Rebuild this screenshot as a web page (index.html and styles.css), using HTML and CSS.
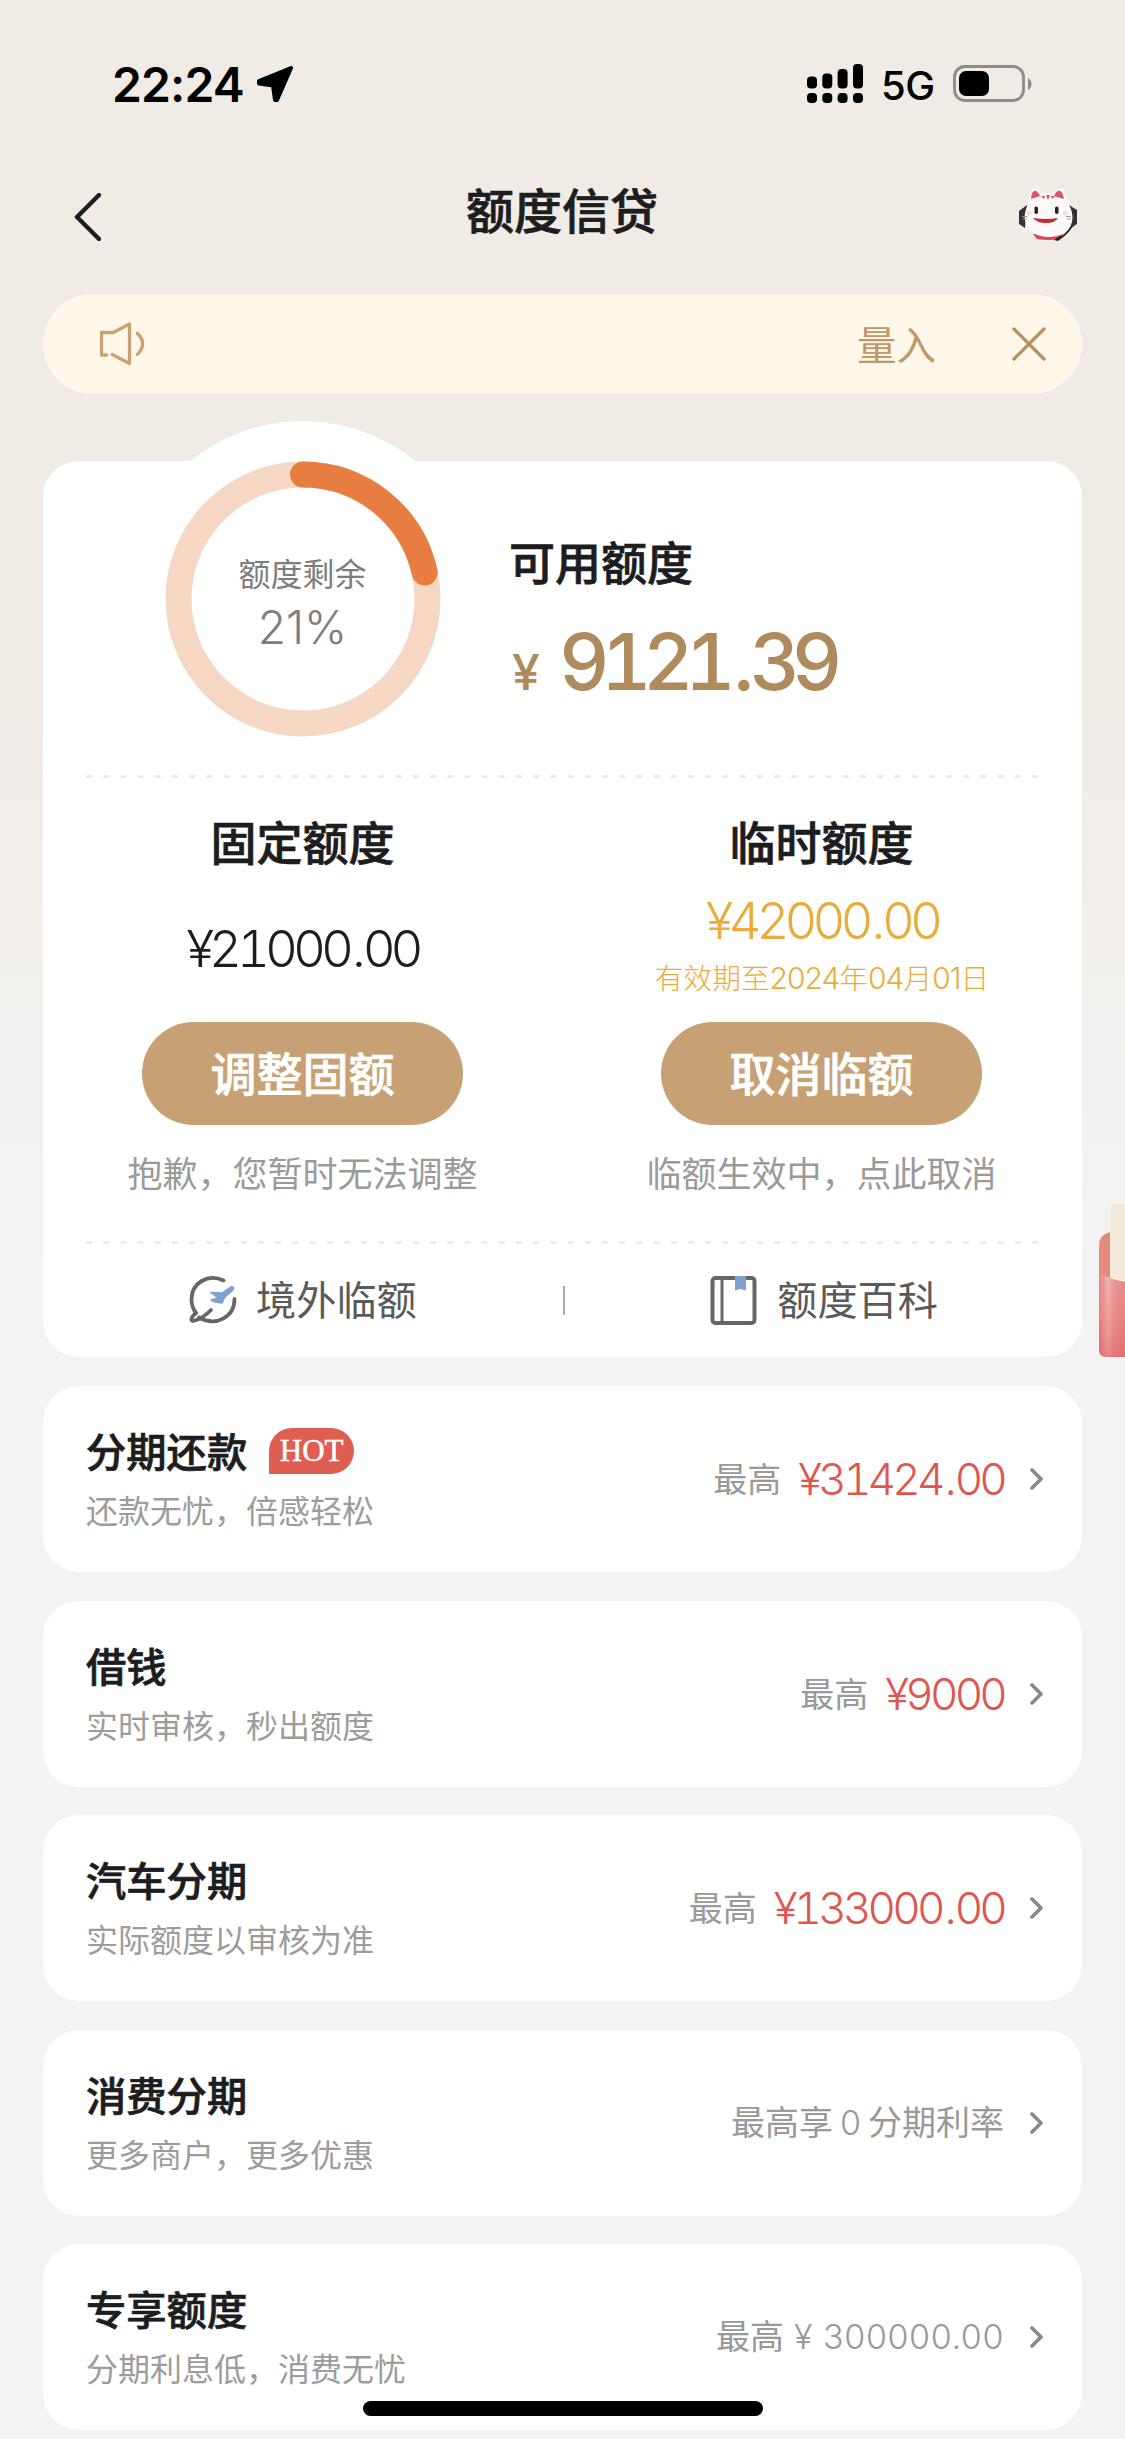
FILE: index.html
```html
<!DOCTYPE html>
<html lang="zh-CN">
<head>
<meta charset="utf-8">
<title>额度信贷</title>
<link rel="stylesheet" href="styles.css">
</head>
<body>
<div class="screen">
  <div class="status">
    <span class="time">22:24</span>
    <svg class="loc" viewBox="0 0 38 38"><path d="M35 3 21 35H19L17 20.500 3 18.500V16Z" stroke="#000" stroke-width="4" stroke-linejoin="round"/></svg>
    <svg class="signal" viewBox="0 0 57 40"><rect x="0" y="12.500" width="10" height="12" rx="4"/><rect x="15.300" y="9.500" width="10" height="15" rx="4"/><rect x="30.600" y="5" width="10" height="19.500" rx="4"/><rect x="46" y="0" width="10" height="24.500" rx="4"/><rect x="0" y="29" width="10" height="10" rx="4"/><rect x="15.300" y="29" width="10" height="10" rx="4"/><rect x="30.600" y="29" width="10" height="10" rx="4"/><rect x="46" y="29" width="10" height="10" rx="4"/></svg>
    <span class="net">5G</span>
    <svg class="battery" viewBox="0 0 79 38"><rect x="1.500" y="1.500" width="69" height="34" rx="10.500" fill="none" stroke="#8f8b87" stroke-width="2.800"/><rect x="6" y="6" width="30" height="25" rx="7"/><path d="M75 13q3.500 2 3.500 6t-3.500 6z" fill="#8f8b87"/></svg>
  </div>
  <div class="nav">
    <svg class="back" viewBox="0 0 28 48"><path d="M26 2 4 24 26 46" fill="none" stroke="#1d1d1f" stroke-width="4.400" stroke-linecap="round" stroke-linejoin="round"/></svg>
    <h1 class="nav-title">额度信贷</h1>
    <svg class="cat" viewBox="0 0 62 56">
      <path d="M10 18 2 24V37L8 41zM52 18 60 23V37L54 41z" fill="#333133"/>
      <path d="M16 47H46L42 52Q31 54 20 52Z" fill="#dc4658"/>
      <path d="M11 18 13 6C15 0 21 0 24 7Q31 5 38 7C41 0 47 0 48 6L52 18C61 34 52 50 32 50S2 34 11 18Z" fill="#fffaf9"/>
      <path d="M14 12C15 1 20 2 23 9ZM37 9C40 2 45 1 47 12Z" fill="#dd5468"/>
      <path d="M29 8 31 13 33 8ZM24 9 27 12 28 9ZM34 9 35 12 38 9Z" fill="#dd5468"/>
      <circle cx="12" cy="26" r="2.500" fill="#fbdcdc"/><circle cx="48" cy="26" r="2.500" fill="#fbdcdc"/>
      <rect x="17.500" y="19.500" width="3.500" height="7.500" rx="1.700" fill="#222"/><rect x="38" y="19.500" width="3.500" height="7.500" rx="1.700" fill="#222"/>
      <path d="M16 31Q29 33 41 31Q38 36 29 36T16 31Z" fill="#c92a31"/>
      <path d="M5 29.500h5M6 32h4M54 29.500h-5M54 32h-4" stroke="#999" stroke-width="1"/>
      <path d="M55 39Q49 48 43 51" fill="none" stroke="#222" stroke-width="1.800"/><path d="M37 53 43 49 46 50 41 54Z" fill="#222"/>
    </svg>
  </div>
  <div class="notice">
    <svg class="speaker" viewBox="0 0 47 44"><g fill="none" stroke="#c9a274" stroke-width="3.300" stroke-linecap="round" stroke-linejoin="round"><path d="M7.500 33H2.500V10.500H14.300L30.500 2V41.500L13.300 32.500"/><path d="M38.300 11.200Q49 21.700 38.300 32.300"/></g></svg>
    <span class="notice-text">量入</span>
    <svg class="close" viewBox="0 0 34 34"><path d="M2 2 32 32M32 2 2 32" stroke="#b98f5e" stroke-width="3.300" stroke-linecap="round"/></svg>
  </div>

  <section class="quota">
    <div class="quota-bump"></div>
    <div class="overview">
      <div class="ring">
        <svg class="ring-svg" viewBox="0 0 276 276"><circle cx="138" cy="138" r="124.500" fill="none" stroke="#f6d7c4" stroke-width="26"/><path d="M138 13.500A124.500 124.500 0 0 1 259.700 111.500" fill="none" stroke="#e87d42" stroke-width="26" stroke-linecap="round"/></svg>
        <div class="ring-text"><span class="ring-label">额度剩余</span><span class="ring-value">21%</span></div>
      </div>
      <div class="available">
        <h2 class="heading">可用额度</h2>
        <div class="big"><span class="yen">¥</span><span class="big-num">9121<span class="dot">.</span>39</span></div>
      </div>
    </div>
    <svg class="dash" viewBox="0 0 952 3"><path d="M0 1.500H952" stroke="#e8e8e8" stroke-width="2.500" stroke-dasharray="6 11.200"/></svg>
    <div class="columns">
      <div class="col">
        <h2 class="heading">固定额度</h2>
        <div class="amounts"><span class="amount">¥21000<span class="dot">.</span>00</span></div>
        <div class="pill">调整固额</div>
        <p class="hint">抱歉，您暂时无法调整</p>
      </div>
      <div class="col">
        <h2 class="heading">临时额度</h2>
        <div class="amounts gold"><span class="amount">¥42000<span class="dot">.</span>00</span><span class="valid">有效期至<span class="vn">2024</span>年<span class="vn">04</span>月<span class="vn">01</span>日</span></div>
        <div class="pill">取消临额</div>
        <p class="hint">临额生效中，点此取消</p>
      </div>
    </div>
    <svg class="dash" viewBox="0 0 952 3"><path d="M0 1.500H952" stroke="#e8e8e8" stroke-width="2.500" stroke-dasharray="6 11.200"/></svg>
    <div class="links">
      <div class="link">
        <svg class="link-icon" viewBox="0 0 48 50"><g fill="none" stroke="#666" stroke-width="3.800" stroke-linecap="round" stroke-linejoin="round"><path d="M34.500 5.500C19-2 2.500 8 2.500 24.500C2.500 30 4 34 7 38"/><path d="M45.500 24C45.500 42 27 52 10 42.500"/><path d="M7 38C1 43 1 47 6 45.500C12 44 18 39 22 35"/></g><path d="M42.500 11.500Q45.500 12 44 15L36 22 33 28 26 27 22 25 29 23 22 17.500 33 18Z" fill="#7ea1cf" stroke="#7ea1cf" stroke-width="1.500" stroke-linejoin="round"/></svg>
        <span>境外临额</span>
      </div>
      <i class="divider"></i>
      <div class="link">
        <svg class="link-icon" viewBox="0 0 48 50"><rect x="2.500" y="3" width="42" height="45" rx="3" fill="none" stroke="#666" stroke-width="4"/><path d="M12 3V48" stroke="#666" stroke-width="3"/><path d="M25 1H36V15.500L30.500 14L25 15.500Z" fill="#7ea1cf"/></svg>
        <span>额度百科</span>
      </div>
    </div>
  </section>

  <section class="list">
    <div class="item"><div class="info"><h3>分期还款<span class="hot">HOT</span></h3><p>还款无忧，倍感轻松</p></div><div class="value"><span>最高</span><span class="red">¥31424<span class="dot">.</span>00</span></div><svg class="chev" viewBox="0 0 14 22"><path d="M2 2 11 11 2 20"/></svg></div>
    <div class="item"><div class="info"><h3>借钱</h3><p>实时审核，秒出额度</p></div><div class="value"><span>最高</span><span class="red">¥9000</span></div><svg class="chev" viewBox="0 0 14 22"><path d="M2 2 11 11 2 20"/></svg></div>
    <div class="item"><div class="info"><h3>汽车分期</h3><p>实际额度以审核为准</p></div><div class="value"><span>最高</span><span class="red">¥133000<span class="dot">.</span>00</span></div><svg class="chev" viewBox="0 0 14 22"><path d="M2 2 11 11 2 20"/></svg></div>
    <div class="item"><div class="info"><h3>消费分期</h3><p>更多商户，更多优惠</p></div><div class="value"><span class="promo">最高享<span class="zero">0</span>分期利率</span></div><svg class="chev" viewBox="0 0 14 22"><path d="M2 2 11 11 2 20"/></svg></div>
    <div class="item"><div class="info"><h3>专享额度</h3><p>分期利息低，消费无忧</p></div><div class="value"><span>最高<span class="plain">¥ 300000.00</span></span></div><svg class="chev" viewBox="0 0 14 22"><path d="M2 2 11 11 2 20"/></svg></div>
  </section>

  <svg class="packet" viewBox="0 0 26 154">
    <defs><linearGradient id="front" x1="0" y1="0" x2="1" y2="0"><stop offset="0" stop-color="#e07f7c"/><stop offset=".35" stop-color="#f1bab8"/><stop offset=".6" stop-color="#e89694"/><stop offset="1" stop-color="#e28482"/></linearGradient><linearGradient id="shade" x1="0" y1="0" x2="0" y2="1"><stop offset="0" stop-color="#f09c9a" stop-opacity=".2"/><stop offset="1" stop-color="#dd5b5e" stop-opacity=".55"/></linearGradient></defs>
    <path d="M0 80V42Q0 30 12 28V80Z" fill="#e48a7b"/><path d="M11 4Q11 0 15 0H26V90H11Z" fill="#f3eadb"/>
    <path d="M0 69Q14 76 26 78V153H7Q0 153 0 146Z" fill="url(#front)"/><path d="M0 69Q14 76 26 78V153H7Q0 153 0 146Z" fill="url(#shade)"/>
  </svg>
  <div class="home"></div>
</div>
</body>
</html>
```
FILE: styles.css
```css
* { box-sizing: border-box; margin: 0; padding: 0; }
body { background: #f2f3f5; }
.screen {
  position: relative;
  width: 1125px;
  height: 2439px;
  overflow: hidden;
  font-family: "Noto Sans CJK SC", sans-serif;
  color: #1d1d1f;
  background: linear-gradient(#f0ebe5 0, #f0ebe5 700px, #f3f3f3 1250px, #f3f3f3 1386px, #f2f3f5 1387px);
}
svg { display: block; flex: none; }
h1, h2, h3 { font-weight: 500; -webkit-text-stroke: 0.7px currentColor; }

.status { display: flex; align-items: center; height: 168px; padding: 0 93px 0 112px; color: #000; font-family: Inter, sans-serif; }
.time { font-size: 48px; font-weight: 600; width: 144px; letter-spacing: -0.9px; }
.loc { width: 38px; height: 38px; }
.signal { width: 57px; height: 40px; margin-left: auto; }
.net { font-size: 40px; font-weight: 500; margin: 2px 0 0 17px; width: 56px; letter-spacing: -0.5px; }
.battery { width: 79px; height: 38px; margin-left: 16px; }

.nav { display: flex; align-items: center; justify-content: space-between; height: 94px; padding: 0 46px 0 73px; }
.back { width: 28px; height: 48px; margin-top: 4px; }
.nav-title { font-size: 48px; line-height: 84px; margin: 0 0 14px 6px; }
.cat { width: 62px; height: 56px; }

.notice { display: flex; align-items: center; height: 100px; margin: 32px 43px 0; padding: 0 36px 0 56px; border-radius: 50px; background: #fff8ea; }
.speaker { width: 47px; height: 44px; }
.notice-text { margin: 0 0 4px auto; font-size: 39.5px; font-weight: 400; color: #c09768; }
.close { width: 34px; height: 34px; margin-left: 76px; }

.quota { position: relative; height: 896px; margin: 67px 43px 0; border-radius: 36px; background: #fff; }
.quota-bump { position: absolute; left: 83px; top: -40px; width: 354px; height: 354px; border-radius: 50%; background: #fff; }
.overview { position: relative; display: flex; height: 314px; padding-left: 122px; }
.ring { display: grid; width: 276px; height: 276px; }
.ring-svg, .ring-text { grid-area: 1 / 1; }
.ring-svg { width: 276px; height: 276px; }
.ring-text { display: flex; flex-direction: column; align-items: center; padding: 87px 1px 0 0; color: #7d7d7d; }
.ring-label { font-size: 32px; line-height: 48px; font-weight: 400; }
.ring-value { margin-top: 2px; font: 350 46px/58px Inter, sans-serif; }
.available { padding: 64px 0 0 68px; }
.heading { font-size: 46px; line-height: 70px; }
.big { display: flex; align-items: baseline; color: #ae8a5c; font-family: Inter, sans-serif; margin-top: 17px; line-height: 100px; }
.yen { font-size: 50px; font-weight: 500; width: 50px; padding-left: 3px; }
.big-num { font-size: 78px; font-weight: 500; letter-spacing: -8.5px; font-variant-numeric: tabular-nums; }
.big-num .dot { margin: 0 4px 0 6px; }
.dash { position: relative; width: 952px; height: 3px; margin-left: 43px; }
.columns { display: flex; height: 463px; padding: 27px 1px 0 0; }
.col { flex: 1; display: flex; flex-direction: column; align-items: center; }
.amounts { display: flex; flex-direction: column; align-items: center; justify-content: center; height: 147px; padding: 1px 0 0 0; }
.amount { font: 350 51px/62px Inter, sans-serif; letter-spacing: -5px; font-variant-numeric: tabular-nums; }
.amount .dot, .red .dot { margin: 0 2px 0 3px; }
.amounts.gold { padding: 0 0 5px 1px; }
.gold { color: #e9ac3c; }
.valid { font-size: 28.7px; line-height: 50px; font-weight: 300; white-space: nowrap; }
.vn { font-family: Inter, sans-serif; font-size: 30px; letter-spacing: -1px; }
.pill { width: 321px; height: 103px; border-radius: 52px; background: #c7a174; color: #fff; font-size: 46px; font-weight: 500; line-height: 99px; text-align: center; -webkit-text-stroke: 0.7px currentColor; }
.hint { margin-top: 21px; font-size: 35px; line-height: 52px; font-weight: 400; color: #9a9a9a; }
.links { display: flex; align-items: center; justify-content: space-between; height: 112px; padding: 0 144px 0 146px; color: #5a5a5a; font-size: 40.2px; }
.link { display: flex; align-items: center; gap: 19px; }
.link span { margin-bottom: 5px; }
.link-icon { width: 48px; height: 50px; }
.divider { width: 2px; height: 29px; background: #aaa; }

.list { display: flex; flex-direction: column; gap: 28.6px; margin: 29px 43px 0; }
.item { display: flex; align-items: center; height: 186px; padding: 0 38px 0 43px; border-radius: 36px; background: #fff; }
.info { flex: 1; }
.info h3 { display: flex; align-items: center; font-size: 40.3px; line-height: 60px; }
.info p { font-size: 32px; line-height: 48px; margin-top: 5px; margin-bottom: 5px; font-weight: 400; color: #9c9c9c; }
.hot { width: 85px; height: 46px; margin: 1px 0 -1px 22px; border-radius: 23px 23px 23px 0; background: #df5e51; color: #fff; font: 500 31px/46px "Liberation Serif", serif; text-align: center; -webkit-text-stroke: 0.5px currentColor; }
.value { display: flex; align-items: center; gap: 17px; margin-right: 26px; font-size: 34px; line-height: 50px; color: #999; font-weight: 400; }
.value > span:first-child { margin-bottom: 2px; }
.red { font-family: Inter, sans-serif; font-weight: 350; font-size: 44px; color: #df5550; letter-spacing: -3.8px; margin-right: -3px; padding-right: 3px; font-variant-numeric: tabular-nums; }
.zero, .plain { font-family: Inter, sans-serif; font-weight: 350; }
.plain { margin-left: 10px; letter-spacing: 0.6px; }
.zero { margin: 0 7px; }
.chev { width: 14px; height: 22px; fill: none; stroke: #888; stroke-width: 3.6; stroke-linecap: round; stroke-linejoin: round; }

.packet { position: absolute; left: 1099px; top: 1204px; width: 26px; height: 154px; }
.home { position: absolute; left: 363px; top: 2401px; width: 400px; height: 15px; border-radius: 8px; background: #000; }
```
